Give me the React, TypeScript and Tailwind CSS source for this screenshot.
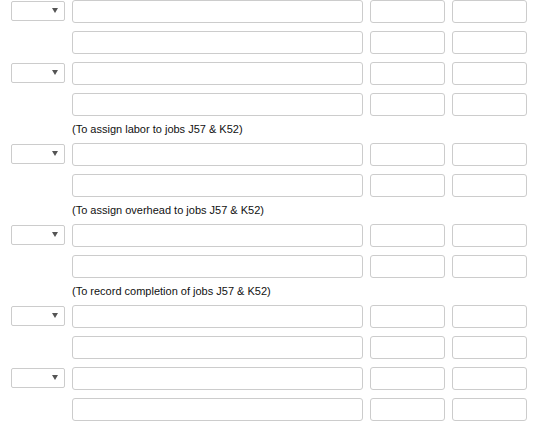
const rows: (string | null)[] = [
  'sel', 'plain', 'sel', 'plain',
  '(To assign labor to jobs J57 & K52)',
  'sel', 'plain',
  '(To assign overhead to jobs J57 & K52)',
  'sel', 'plain',
  '(To record completion of jobs J57 & K52)',
  'sel', 'plain', 'sel', 'plain',
];

function Select() {
  return (
    <div className="relative h-[20px] w-[54px] rounded-[2px] border border-[#cccccc] bg-white mt-[1px]">
      {/* dropdown caret */}
      <span className="absolute right-[6px] top-[6px] h-0 w-0 border-x-[3px] border-t-[5px] border-x-transparent border-t-[#555555]" />
    </div>
  );
}

function Field({ width }: { width: string }) {
  return <div className={`h-[23px] rounded-[3px] border border-[#cccccc] bg-white ${width}`} />;
}

function EntryRow({ withSelect }: { withSelect: boolean }) {
  return (
    <div className="flex items-start gap-[7px]">
      <div className="w-[54px] shrink-0">{withSelect && <Select />}</div>
      <Field width="w-[291px]" />
      <Field width="w-[75px]" />
      <Field width="w-[75px]" />
    </div>
  );
}

export default function App() {
  return (
    <div
      className="flex h-[426px] w-[546px] flex-col gap-2 bg-white pl-[11px] text-[#111111]"
      style={{ fontFamily: '"Liberation Sans", Arial, sans-serif' }}
    >
      {rows.map((r, i) =>
        r === 'sel' || r === 'plain' ? (
          <EntryRow key={i} withSelect={r === 'sel'} />
        ) : (
          <div key={i} className="h-[11px] pl-[61px] text-[11px] leading-[10px]">
            {r}
          </div>
        )
      )}
    </div>
  );
}
